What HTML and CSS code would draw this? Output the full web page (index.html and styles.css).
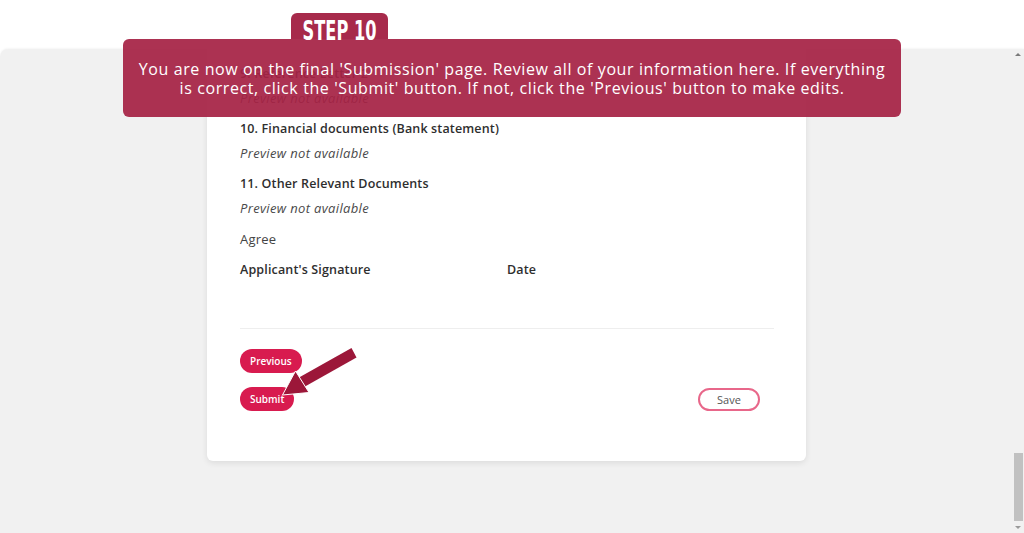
FILE: index.html
```html
<!DOCTYPE html>
<html>
<head>
<meta charset="utf-8">
<link rel="stylesheet" href="styles.css">
</head>
<body>
<div class="topbar"></div>
<div class="viewport">
  <div class="scroll">
    <div class="card">
      <div class="doc">
        <div class="doc-title">9. Reference Letter 2</div>
        <div class="doc-preview">Preview not available</div>
      </div>
      <div class="doc">
        <div class="doc-title">10. Financial documents (Bank statement)</div>
        <div class="doc-preview">Preview not available</div>
      </div>
      <div class="doc">
        <div class="doc-title">11. Other Relevant Documents</div>
        <div class="doc-preview">Preview not available</div>
      </div>
      <div class="agree">Agree</div>
      <div class="sig-row">
        <div class="doc-title">Applicant's Signature</div>
        <div class="doc-title">Date</div>
      </div>
      <hr class="divider">
      <div class="actions">
        <button class="btn btn-primary">Previous</button>
        <div class="actions-row">
          <button class="btn btn-primary">Submit</button>
          <button class="btn btn-outline">Save</button>
        </div>
      </div>
    </div>
  </div>
  <div class="scrollbar">
    <div class="sb-arrow sb-up"></div>
    <div class="sb-track"><div class="sb-thumb"></div></div>
    <div class="sb-arrow sb-down"></div>
  </div>
</div>

<div class="tour">
  <div class="tour-tab"><span class="tour-tab-text">STEP 10</span></div>
  <div class="tour-box">You are now on the final 'Submission' page. Review all of your information here. If everything is correct, click the 'Submit' button. If not, click the 'Previous' button to make edits.</div>
</div>

<svg class="pointer" width="1024" height="533" viewBox="0 0 1024 533">
  <polygon points="299,377.5 351.5,348 356.5,357.5 305,386.5" fill="#9c1739"/>
  <polygon points="282.5,395 295.5,371 309,392.5" fill="#9c1739" stroke="#ffffff" stroke-width="1" stroke-linejoin="miter"/>
</svg>
</body>
</html>
```
FILE: styles.css
```css
* { box-sizing: border-box; }
html, body { margin: 0; padding: 0; }
body {
  width: 1024px;
  height: 533px;
  overflow: hidden;
  background: #ffffff;
  font-family: "Open Sans", "Noto Sans", sans-serif;
  position: relative;
}
.topbar { height: 49px; background: #ffffff; }
.viewport {
  height: 484px;
  display: flex;
  background: #f1f1f1;
  border-top-left-radius: 8px;
  box-shadow: 0 -1px 2px rgba(0,0,0,0.04);
}
.scroll {
  flex: 1;
  overflow: hidden;
  display: flex;
  justify-content: center;
  align-items: flex-start;
}
.card {
  width: 599px;
  margin-left: 1px;
  background: #ffffff;
  border-radius: 0 0 6px 6px;
  box-shadow: 0 2px 6px rgba(0,0,0,0.09);
  padding: 13px 32px 50px 33px;
}
.doc { margin-bottom: 7px; }
.doc-title {
  font-size: 12.5px;
  font-weight: 600;
  color: #2e2e2e;
  line-height: 24px;
  letter-spacing: 0.15px;
}
.doc-preview {
  font-size: 13px;
  font-style: italic;
  color: #4a4a4a;
  line-height: 24px;
  letter-spacing: 0.35px;
}
.agree {
  font-size: 13px;
  color: #444;
  line-height: 24px;
  margin-top: 1px;
  margin-bottom: 7px;
  letter-spacing: 0.2px;
}
.sig-row {
  display: grid;
  grid-template-columns: 267px 1fr;
}
.divider {
  border: 0;
  border-top: 1px solid #eeeeee;
  margin: 46px 0 20px;
}
.actions { display: flex; flex-direction: column; gap: 14px; }
.actions-row {
  display: flex;
  justify-content: space-between;
  align-items: center;
  padding-right: 14px;
}
.btn {
  font-family: "Open Sans", "Noto Sans", sans-serif;
  height: 24px;
  border-radius: 12px;
  font-size: 10px;
  font-weight: 600;
  padding: 0 10px;
  cursor: pointer;
  align-self: flex-start;
}
.btn-primary {
  background: #d81b4f;
  color: #ffffff;
  border: 0;
}
.btn-outline {
  height: 23px;
  width: 62px;
  background: #ffffff;
  border: 2px solid #e8678a;
  color: #555;
  font-weight: 500;
  font-size: 11px;
  align-self: center;
}
.scrollbar {
  width: 12px;
  display: flex;
  flex-direction: column;
  align-items: center;
  background: #f1f1f1;
}
.sb-arrow {
  width: 0; height: 0;
  border-left: 3px solid transparent;
  border-right: 3px solid transparent;
  margin: 4px 0;
}
.sb-up { border-bottom: 3px solid #7a7a7a; margin-top: 4px; }
.sb-down { border-top: 3px solid #9a9a9a; }
.sb-track { flex: 1; width: 100%; display: flex; flex-direction: column; justify-content: flex-end; padding: 0 1px 1px 2px; }
.sb-thumb { height: 68px; background: #c1c1c1; }

.tour { position: absolute; left: 123px; top: 13px; width: 778px; }
.tour-tab {
  margin-left: 168px;
  width: 97px;
  height: 26px;
  background: #a72a4b;
  border-radius: 6px 6px 0 0;
  display: flex;
  justify-content: center;
  overflow: visible;
}
.tour-tab-text {
  display: inline-block;
  white-space: nowrap;
  color: #fff;
  font-family: "DejaVu Sans", sans-serif;
  font-weight: 700;
  font-size: 27px;
  line-height: 35px;
  transform: scaleX(0.6);
  letter-spacing: 0px;
}
.tour-box {
  height: 78px;
  background: rgba(166, 34, 69, 0.93);
  border-radius: 6px;
  color: #fff;
  font-size: 16px;
  line-height: 19px;
  text-align: center;
  padding: 21px 10px 0;
  letter-spacing: 0.6px;
}
.pointer { position: absolute; left: 0; top: 0; pointer-events: none; }
```
